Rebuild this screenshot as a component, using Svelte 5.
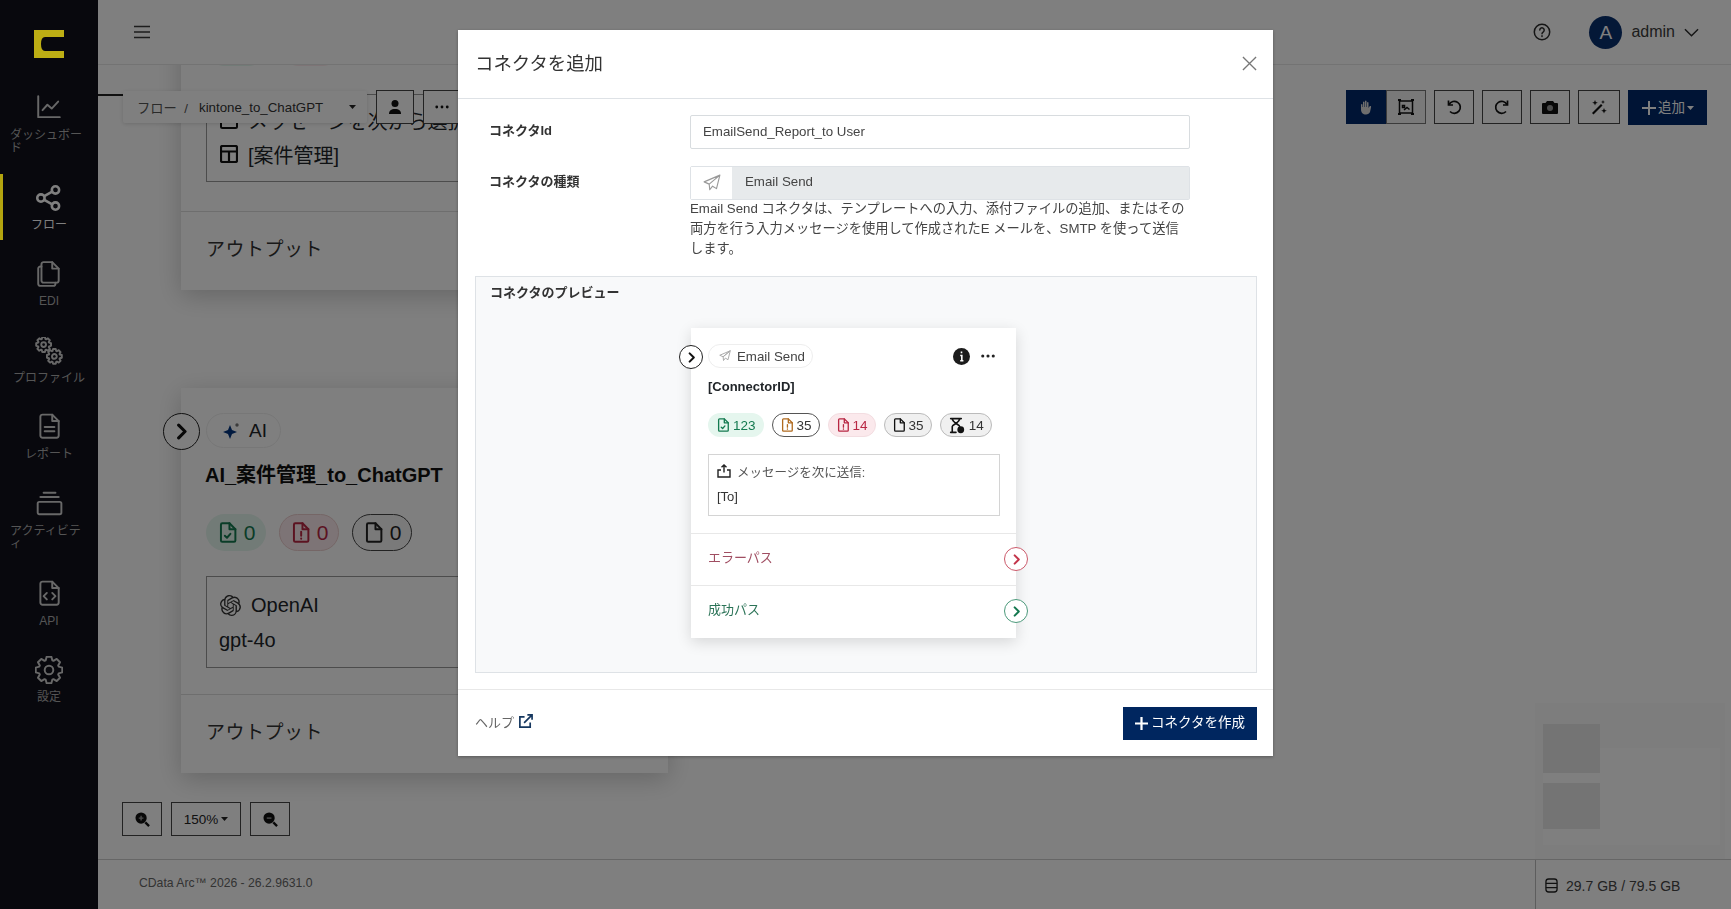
<script>
  // gear outline, used by the profile and settings icons
  function gear(cx, cy, r, teeth = 8) {
    const pts = [];
    const step = (Math.PI * 2) / teeth;
    for (let i = 0; i < teeth; i++) {
      const a = i * step;
      [[-0.3, r * 0.76], [-0.16, r], [0.16, r], [0.3, r * 0.76]].forEach(([o, rad]) => {
        const t = a + o * step * 1.4;
        pts.push((cx + Math.cos(t) * rad).toFixed(2) + " " + (cy + Math.sin(t) * rad).toFixed(2));
      });
    }
    return "M" + pts.join("L") + "Z";
  }
  function ring(cx, cy, r) {
    return `M${cx - r} ${cy}a${r} ${r} 0 1 0 ${r * 2} 0a${r} ${r} 0 1 0 ${-r * 2} 0Z`;
  }

  const nav = [
    { label: "ダッシュボード", paths: ["M3 2v19.500h20", "M7 15l4.500-5 4 3.500L21.500 7"] },
    { label: "フロー", active: true, paths: [ring(19, 5.5, 3.4), ring(19, 20.5, 3.4), ring(5.5, 13, 3.4), "M8.600 11.300l7.400-4.200", "M8.600 14.700l7.400 4.200"], sw: 2.4 },
    { label: "EDI", paths: ["M8 2h8l6 6v11a2 2 0 0 1-2 2H8a2 2 0 0 1-2-2V4a2 2 0 0 1 2-2Z", "M16 2v6h6", "M6 6H5a2 2 0 0 0-2 2v14a2 2 0 0 0 2 2h12a2 2 0 0 0 2-2v-1"] },
    { label: "プロファイル", paths: [gear(8, 7, 7), ring(8, 7, 2.2), gear(18, 18, 7), ring(18, 18, 2.2)] },
    { label: "レポート", paths: ["M7 1.500h9l6 6V21a2 2 0 0 1-2 2H7a2 2 0 0 1-2-2V3.500a2 2 0 0 1 2-2Z", "M16 1.500v6h6", "M9 13h9", "M9 17h9"] },
    { label: "アクティビティ", paths: ["M4 11h19a1.500 1.500 0 0 1 1.500 1.500V21a1.500 1.500 0 0 1-1.500 1.500H4A1.500 1.500 0 0 1 2.500 21v-8.500A1.500 1.500 0 0 1 4 11Z", "M5 6.500h17", "M8 2.500h11"] },
    { label: "API", paths: ["M7 1.500h9l6 6V21a2 2 0 0 1-2 2H7a2 2 0 0 1-2-2V3.500a2 2 0 0 1 2-2Z", "M16 1.500v6h6", "M11 12l-3 3 3 3", "M16 12l3 3-3 3"] },
    { label: "設定", paths: [gear(13, 13, 12.5), ring(13, 13, 4)] }
  ];

  const plane = "M15 1L1 7l4.500 2L15 1ZM15 1L5.500 9 6 14l2.500-3.200L12 13 15 1Z";
  const caret = "M0 0h7L3.500 4Z";
  const openai = "M22.2819 9.8211a5.9847 5.9847 0 0 0-.5157-4.9108 6.0462 6.0462 0 0 0-6.5098-2.9A6.0651 6.0651 0 0 0 4.9807 4.1818a5.9847 5.9847 0 0 0-3.9977 2.9 6.0462 6.0462 0 0 0 .7427 7.0966 5.98 5.98 0 0 0 .511 4.9107 6.051 6.051 0 0 0 6.5146 2.9001A5.9847 5.9847 0 0 0 13.2599 24a6.0557 6.0557 0 0 0 5.7718-4.2058 5.9894 5.9894 0 0 0 3.9977-2.9001 6.0557 6.0557 0 0 0-.7475-7.0729zm-9.022 12.6081a4.4755 4.4755 0 0 1-2.8764-1.0408l.1419-.0804 4.7783-2.7582a.7948.7948 0 0 0 .3927-.6813v-6.7369l2.02 1.1686a.071.071 0 0 1 .038.052v5.5826a4.504 4.504 0 0 1-4.4945 4.4944zm-9.6607-4.1254a4.4708 4.4708 0 0 1-.5346-3.0137l.142.0852 4.783 2.7582a.7712.7712 0 0 0 .7806 0l5.8428-3.3685v2.3324a.0804.0804 0 0 1-.0332.0615L9.74 19.9502a4.4992 4.4992 0 0 1-6.1408-1.6464zM2.3408 7.8956a4.485 4.485 0 0 1 2.3655-1.9728V11.6a.7664.7664 0 0 0 .3879.6765l5.8144 3.3543-2.0201 1.1685a.0757.0757 0 0 1-.071 0l-4.8303-2.7865A4.504 4.504 0 0 1 2.3408 7.872zm16.5963 3.8558L13.1038 8.364 15.1192 7.2a.0757.0757 0 0 1 .071 0l4.8303 2.7913a4.4944 4.4944 0 0 1-.6765 8.1042v-5.6772a.79.79 0 0 0-.407-.667zm2.0107-3.0231l-.142-.0852-4.7735-2.7818a.7759.7759 0 0 0-.7854 0L9.409 9.2297V6.8974a.0662.0662 0 0 1 .0284-.0615l4.8303-2.7866a4.4992 4.4992 0 0 1 6.6802 4.66zM8.3065 12.863l-2.02-1.1638a.0804.0804 0 0 1-.038-.0567V6.0742a4.4992 4.4992 0 0 1 7.3757-3.4537l-.142.0805L8.704 5.459a.7948.7948 0 0 0-.3927.6813zm1.0976-2.3654l2.602-1.4998 2.6069 1.4998v2.9994l-2.5974 1.4997-2.6067-1.4997Z";
</script>

{#snippet doc(mark)}
  <svg class="doc" viewBox="0 0 16 16" fill="none" stroke="currentColor" stroke-width="1.500" stroke-linejoin="round" stroke-linecap="round">
    <path d="M4 1h5.500L14 5.500V14a1 1 0 0 1-1 1H4a1 1 0 0 1-1-1V2a1 1 0 0 1 1-1Z" />
    <path d="M9.500 1v4.500H14" />
    {#if mark === "ok"}<path d="M6 10.500l1.600 1.500 2.600-3" />{/if}
    {#if mark === "warn"}<path d="M8.500 7.500v3M8.500 12.600v.2" />{/if}
  </svg>
{/snippet}

{#snippet badge(kind, mark, n)}
  <span class="badge {kind}">
    {#if mark === "wait"}
      <svg class="doc wait" viewBox="0 0 16 16" fill="none" stroke="currentColor" stroke-width="1.500" stroke-linecap="round">
        <path d="M2.500 1.500h10M2.500 14.500h5M4 1.500c0 4 7 5.500 7 7.500M11 1.500c0 4-7 5.500-7 7.500v5.500" />
        <circle cx="12" cy="12" r="3.200" fill="currentColor" stroke="none" />
      </svg>
    {:else}
      {@render doc(mark)}
    {/if}
    {n}
  </span>
{/snippet}

{#snippet chevron(kind)}
  <span class="chev {kind}">
    <svg viewBox="0 0 12 12" fill="none" stroke="currentColor" stroke-width="2.200" stroke-linecap="round" stroke-linejoin="round"><path d="M4 1.500 8.500 6 4 10.500" /></svg>
  </span>
{/snippet}

<div class="app">
  <aside class="sidebar">
    <div class="logo">
      <svg viewBox="0 0 30 28" width="30" height="28"><path d="M0 0h30v7H11Q7 7 7 14t4 7h19v7H0Z" fill="#bdae14" /></svg>
    </div>
    <nav class="nav">
      {#each nav as item}
        <div class="nav-item" class:active={item.active}>
          <svg viewBox="0 0 26 26" width="28" height="28" fill="none" stroke="currentColor" stroke-width={item.sw ?? 1.8} stroke-linecap="round" stroke-linejoin="round">
            {#each item.paths as d}<path {d} />{/each}
          </svg>
          <span>{item.label}</span>
        </div>
      {/each}
    </nav>
  </aside>

  <div class="main">
    <header class="topbar">
      <svg class="burger" viewBox="0 0 16 14" width="16" height="14" stroke="#333" stroke-width="1.600"><path d="M0 1.500h16M0 7h16M0 12.500h16" /></svg>
      <div class="user">
        <svg viewBox="0 0 18 18" width="18" height="18" fill="none" stroke="#222" stroke-width="1.500"><circle cx="9" cy="9" r="7.700" /><path d="M6.800 7a2.200 2.200 0 1 1 3.500 1.800c-.9.600-1.300 1-1.300 2M9 12.800v.6" stroke-linecap="round" /></svg>
        <span class="avatar">A</span>
        <span class="uname">admin</span>
        <svg viewBox="0 0 16 9" width="15" height="9" fill="none" stroke="#222" stroke-width="1.500"><path d="M1 1l7 7 7-7" /></svg>
      </div>
    </header>

    <section class="canvas">
      <div class="tab-line"></div>

      <!-- flow nodes, placed on the canvas -->
      <article class="node node-one">
        <div class="stats">
          <span class="stub ok"></span>
          <span class="stub err"></span>
        </div>
        <div class="node-box">
          <div class="box-line">
            <svg viewBox="0 0 18 18" width="18" height="18" fill="none" stroke="#111" stroke-width="2"><rect x="1" y="1" width="16" height="16" rx="1.500" /></svg>
            <span>メッセージを次から選択</span>
          </div>
          <div class="box-line">
            <svg viewBox="0 0 18 18" width="18" height="18" fill="none" stroke="#111" stroke-width="2.200"><rect x="1" y="1" width="16" height="16" rx="1.500" /><path d="M1 6.500h16M9 6.500V17" /></svg>
            <span>[案件管理]</span>
          </div>
        </div>
        <div class="node-out">アウトプット</div>
      </article>

      <article class="node node-two">
        <div class="node-chev">{@render chevron("plain big")}</div>
        <div class="ai-pill">
          <svg viewBox="0 0 18 18" width="18" height="18"><path d="M8 3l2 5 5 2-5 2-2 5-2-5-5-2 5-2Z" fill="#03357f" /><circle cx="15" cy="3" r="1.700" fill="#777" /></svg>
          AI
        </div>
        <h3>AI_案件管理_to_ChatGPT</h3>
        <div class="stats">
          {@render badge("ok lg", "ok", 0)}
          {@render badge("err lg", "warn", 0)}
          {@render badge("out lg", "", 0)}
        </div>
        <div class="node-box">
          <div class="box-line">
            <svg viewBox="0 0 24 24" width="21" height="21" fill="#333"><path d={openai} /></svg>
            <span>OpenAI</span>
          </div>
          <div class="box-model">gpt-4o</div>
        </div>
        <div class="node-out">アウトプット</div>
      </article>

      <div class="crumbs">
        <span class="crumb-root">フロー&nbsp; /</span>
        <span class="crumb-name">kintone_to_ChatGPT</span>
        <svg viewBox="0 0 7 4" width="7" height="4"><path d={caret} fill="#222" /></svg>
      </div>
      <div class="crumb-actions">
        <button class="tool">
          <svg viewBox="0 0 16 16" width="16" height="16" fill="#111"><circle cx="8" cy="4.500" r="3.500" /><path d="M2 15c0-3.500 2-5 6-5s6 1.500 6 5Z" /></svg>
        </button>
        <button class="tool">
          <svg viewBox="0 0 16 4" width="14" height="4" fill="#111"><circle cx="2" cy="2" r="1.600" /><circle cx="8" cy="2" r="1.600" /><circle cx="14" cy="2" r="1.600" /></svg>
        </button>
      </div>

      <div class="toolbar">
        <div class="group">
          <button class="tool on">
            <svg viewBox="0 0 16 16" width="16" height="16" fill="#ddd"><path d="M3 8V5.500a1 1 0 0 1 1.500 0V8h.5V3a1 1 0 0 1 1.500 0v5h.5V2a1 1 0 0 1 1.500 0v6h.5V3.500a1 1 0 0 1 1.500 0V9l1-1.500c1-1 2 0 1.500 1L12 13c-.7 1.500-2 2.500-4 2.500-3 0-5-2-5-5Z" /></svg>
          </button>
          <button class="tool">
            <svg viewBox="0 0 16 16" width="16" height="16" fill="none" stroke="#111" stroke-width="1.500"><rect x="1.500" y="2" width="13" height="12" /><path d="M4.500 6.500h2v2h-2Z M6 11l3-2.500 2.500 2" /><path d="M0 1h3M13 1h3M0 15h3M13 15h3" stroke-width="2" /></svg>
          </button>
        </div>
        <button class="tool">
          <svg viewBox="0 0 16 16" width="16" height="16" fill="none" stroke="#111" stroke-width="1.700"><path d="M3 5.500A6 6 0 1 1 4 12.500" /><path d="M2.500 1.500v4.500h4.500" /></svg>
        </button>
        <button class="tool">
          <svg viewBox="0 0 16 16" width="16" height="16" fill="none" stroke="#111" stroke-width="1.700"><path d="M13 5.500A6 6 0 1 0 12 12.500" /><path d="M13.500 1.500v4.500H9" /></svg>
        </button>
        <button class="tool">
          <svg viewBox="0 0 16 14" width="16" height="14" fill="#111"><path d="M5 1h6l1.500 2H15a1 1 0 0 1 1 1v9a1 1 0 0 1-1 1H1a1 1 0 0 1-1-1V4a1 1 0 0 1 1-1h2.500Z" /><circle cx="8" cy="8" r="3" fill="#999" /></svg>
        </button>
        <button class="tool wide">
          <svg viewBox="0 0 16 16" width="16" height="16" fill="#111"><path d="M1 14L10 5l1.500 1.500-9 9Z" /><path d="M4 1l.8 2 2 .8-2 .8L4 6.600l-.8-2-2-.8 2-.8ZM13 9l.8 2 2 .8-2 .8-.8 2-.8-2-2-.8 2-.8ZM12 1l.6 1.400 1.400.6-1.400.6L12 5l-.6-1.400L10 3l1.400-.6Z" /></svg>
        </button>
        <button class="add">
          <svg viewBox="0 0 14 14" width="14" height="14" stroke="#fff" stroke-width="2"><path d="M7 0v14M0 7h14" /></svg>
          <span class="lift">追加</span>
          <svg viewBox="0 0 7 4" width="7" height="4"><path d={caret} fill="#fff" /></svg>
        </button>
      </div>

      <div class="zoomer">
        <button class="tool">
          <svg viewBox="0 0 16 16" width="15" height="15" fill="none" stroke="#111"><circle cx="6.500" cy="6.500" r="6" fill="#111" stroke="none" /><path d="M4 6.500h5M6.500 4v5" stroke="#999" stroke-width="1.500" /><path d="M11 11l4 4" stroke-width="2.500" /></svg>
        </button>
        <button class="tool pct">150%<svg viewBox="0 0 7 4" width="7" height="4"><path d={caret} fill="#222" /></svg></button>
        <button class="tool">
          <svg viewBox="0 0 16 16" width="15" height="15" fill="none" stroke="#111"><circle cx="6.500" cy="6.500" r="6" fill="#111" stroke="none" /><path d="M4 6.500h5" stroke="#999" stroke-width="1.500" /><path d="M11 11l4 4" stroke-width="2.500" /></svg>
        </button>
      </div>

      <div class="minimap">
        <div class="mini-view"></div>
        <div class="mini-node first"></div>
        <div class="mini-node second"></div>
      </div>
    </section>

    <footer class="footer">
      <span class="version">CData Arc™ 2026 - 26.2.9631.0</span>
      <span class="storage">
        <svg viewBox="0 0 14 16" width="13" height="15" fill="none" stroke="#222" stroke-width="1.400"><rect x="1" y="1" width="12" height="14" rx="3" /><path d="M1 5.700h12M1 10.300h12" /></svg>
        29.7 GB / 79.5 GB
      </span>
    </footer>
  </div>

  <div class="backdrop"></div>

  <div class="modal-wrap">
    <div class="modal">
      <div class="modal-head">
        <h2>コネクタを追加</h2>
        <svg viewBox="0 0 16 16" width="15" height="15" stroke="#777" stroke-width="1.400"><path d="M1 1l14 14M15 1L1 15" /></svg>
      </div>

      <div class="modal-body">
        <div class="form-row">
          <div class="form-label">コネクタId</div>
          <div class="form-field">
            <input type="text" value="EmailSend_Report_to User" />
          </div>
        </div>
        <div class="form-row">
          <div class="form-label">コネクタの種類</div>
          <div class="form-field">
            <div class="type-group">
              <span class="type-icon">
                <svg viewBox="0 0 16 16" width="18" height="18" fill="none" stroke="#999" stroke-width="1" stroke-linejoin="round"><path d={plane} /></svg>
              </span>
              <span class="type-name">Email Send</span>
            </div>
            <p class="hint">Email Send コネクタは、テンプレートへの入力、添付ファイルの追加、またはその両方を行う入力メッセージを使用して作成されたE メールを、SMTP を使って送信します。</p>
          </div>
        </div>

        <div class="preview">
          <div class="preview-title">コネクタのプレビュー</div>
          <div class="card">
            <div class="card-in">{@render chevron("plain")}</div>
            <div class="card-top">
              <div class="card-head">
                <span class="pill">
                  <svg viewBox="0 0 16 16" width="12" height="12" fill="none" stroke="#aaa" stroke-width="1.300" stroke-linejoin="round"><path d={plane} /></svg>
                  Email Send
                </span>
                <span class="card-tools">
                  <svg viewBox="0 0 16 16" width="17" height="17"><circle cx="8" cy="8" r="8" fill="#1c1c1c" /><path d="M8 3.400v1.500M6.800 7H8.300v5M6.800 12h3" stroke="#fff" stroke-width="1.500" fill="none" /></svg>
                  <svg viewBox="0 0 16 4" width="14" height="4" fill="#222"><circle cx="2" cy="2" r="1.800" /><circle cx="8" cy="2" r="1.800" /><circle cx="14" cy="2" r="1.800" /></svg>
                </span>
              </div>
              <div class="card-id">[ConnectorID]</div>
              <div class="stats small">
                {@render badge("ok", "ok", 123)}
                {@render badge("warnb", "warn", 35)}
                {@render badge("err", "warn", 14)}
                {@render badge("neutral", "", 35)}
                {@render badge("neutral", "wait", 14)}
              </div>
              <div class="msg">
                <div class="msg-line">
                  <svg viewBox="0 0 14 14" width="14" height="14" fill="none" stroke="#222" stroke-width="1.400"><path d="M7 8.500V1M4.500 3.300 7 1l2.500 2.300" /><path d="M4 6H1v7h12V6H10" /></svg>
                  メッセージを次に送信:
                </div>
                <div class="msg-to">[To]</div>
              </div>
            </div>
            <div class="path err-path">エラーパス {@render chevron("red")}</div>
            <div class="path ok-path">成功パス {@render chevron("green")}</div>
          </div>
        </div>
      </div>

      <div class="modal-foot">
        <span class="help"><span class="lift">ヘルプ</span>
          <svg viewBox="0 0 16 16" width="15" height="15" fill="none" stroke="#15375f" stroke-width="1.800"><path d="M7 3H2v11h11V9" /><path d="M6.500 9.500 15 1M10 1h5v5" /></svg>
        </span>
        <button class="create">
          <svg viewBox="0 0 14 14" width="13" height="13" stroke="#fff" stroke-width="2.400"><path d="M7 0v14M0 7h14" /></svg>
          <span class="lift">コネクタを作成</span>
        </button>
      </div>
    </div>
  </div>
</div>

<style>
  :global(body) {
    margin: 0;
    background: #fff;
    font-family: "Liberation Sans", "Noto Sans CJK JP", sans-serif;
  }

  .app {
    display: flex;
    height: 909px;
    overflow: hidden;
    color: #212529;
  }
  /* Noto's CJK glyphs sit low in the line box */
  .lift {
    position: relative;
    top: -2px;
  }

  /* sidebar */
  .sidebar {
    width: 98px;
    flex: none;
    background: #10101a;
  }
  .logo {
    position: relative;
    z-index: 20;
    display: flex;
    justify-content: center;
    padding: 30px 0 26px;
  }
  .logo svg {
    display: block;
    margin-left: -1px;
  }
  .nav-item {
    position: relative;
    display: flex;
    flex-direction: column;
    align-items: center;
    box-sizing: border-box;
    padding: 10px 10px 8px;
    margin-bottom: 10.600px;
    color: #d0d0d0;
    font-size: 12px;
    line-height: 13px;
  }
  .nav-item span {
    display: block;
    max-width: 78px;
    margin-top: 7px;
    color: #aaa;
    text-align: left;
  }
  .nav-item.active {
    color: #fff;
  }
  .nav-item.active span {
    color: #fff;
  }
  .nav-item.active::before {
    content: "";
    position: absolute;
    z-index: 20;
    left: 0;
    top: 0;
    bottom: 0;
    width: 3px;
    background: #b3a40f;
  }

  /* main column */
  .main {
    flex: 1;
    min-width: 0;
    display: flex;
    flex-direction: column;
  }
  .topbar {
    height: 65px;
    flex: none;
    box-sizing: border-box;
    display: flex;
    align-items: center;
    justify-content: space-between;
    padding: 0 32px 0 36px;
    background: #fff;
    border-bottom: 1px solid #e5e5e5;
    position: relative;
    z-index: 2;
    opacity: 0.96;
  }
  .burger {
    display: block;
  }
  .user {
    display: flex;
    align-items: center;
  }
  .avatar {
    width: 33px;
    height: 33px;
    margin-left: 38px;
    border-radius: 50%;
    background: #00286a;
    color: #fff;
    font-size: 19px;
    line-height: 33px;
    text-align: center;
  }
  .uname {
    margin: 0 9px 0 9px;
    font-size: 16px;
    color: #333;
  }
  .canvas {
    position: relative;
    flex: 1;
    overflow: hidden;
    background: #fff;
  }
  .tab-line {
    position: absolute;
    left: 0;
    top: 29px;
    width: 25px;
    height: 2px;
    background: #222;
  }

  /* flow nodes */
  .node {
    position: absolute;
    left: 83px;
    width: 487px;
    box-sizing: border-box;
    background: #fff;
    box-shadow: 0 6px 24px rgba(0, 0, 0, 0.2);
  }
  .node-one {
    top: -36px;
    height: 261px;
  }
  .node-two {
    top: 323px;
    height: 385px;
    padding-top: 25px;
  }
  .node-chev {
    position: absolute;
    left: -18px;
    top: 25px;
  }
  .ai-pill {
    display: inline-flex;
    align-items: center;
    gap: 9px;
    margin-left: 25px;
    height: 35px;
    padding: 0 13px 0 15px;
    border: 1px solid #eee;
    border-radius: 18px;
    font-size: 19px;
    box-sizing: border-box;
  }
  .node h3 {
    margin: 12px 0 24px 24px;
    font-size: 20px;
    line-height: 30px;
    color: #111;
  }
  .node .stats {
    gap: 13px;
    margin-left: 25px;
  }
  .stub {
    width: 61px;
    height: 37px;
    border-radius: 19px;
    box-sizing: border-box;
  }
  .node-box {
    margin: 25px 27px 0 25px;
    padding: 14px 13px 14px;
    border: 1px solid #999;
    font-size: 20px;
  }
  .node-one .node-box {
    margin-top: 28px;
    padding-top: 8px;
    padding-bottom: 10px;
  }
  .box-line {
    display: flex;
    align-items: center;
    gap: 10px;
    height: 28px;
    white-space: nowrap;
    overflow: hidden;
  }
  .node-one .box-line {
    height: 34px;
  }
  .box-model {
    margin: 8px 0 0 -1px;
    line-height: 26px;
  }
  .node-out {
    position: absolute;
    left: 0;
    right: 0;
    bottom: 0;
    height: 79px;
    box-sizing: border-box;
    padding: 22px 0 0 25px;
    border-top: 1px solid #ddd;
    font-size: 19px;
    letter-spacing: 0.5px;
    color: #333;
  }

  /* badges */
  .stats {
    display: flex;
    gap: 9px;
  }
  .badge {
    display: inline-flex;
    align-items: center;
    justify-content: center;
    gap: 3px;
    height: 24px;
    padding: 0 8px;
    border: 1px solid transparent;
    border-radius: 13px;
    font-size: 13.500px;
    box-sizing: border-box;
  }
  .doc {
    width: 14px;
    height: 14px;
  }
  .doc.wait {
    width: 17px;
    height: 17px;
    margin-right: 1px;
  }
  .badge.lg {
    height: 37px;
    width: 60px;
    gap: 6px;
    padding: 0;
    border-radius: 19px;
    font-size: 21px;
  }
  .badge.lg .doc {
    width: 21px;
    height: 21px;
  }
  .ok {
    background: #e5f6ee;
    color: #147a50;
  }
  .err {
    background: #fbe9ec;
    border-color: #f3dde1;
    color: #b82743;
  }
  .warnb {
    background: #fff;
    border-color: #555;
    color: #333;
  }
  .warnb .doc {
    color: #b06a1e;
  }
  .neutral {
    background: #f0f0f0;
    border-color: #bbb;
    color: #333;
  }
  .neutral .doc {
    color: #111;
  }
  .out {
    background: #f5f5f5;
    border-color: #444;
    color: #222;
  }
  .err.lg {
    border-color: #eacccc;
  }

  /* chevron circles */
  .chev {
    display: inline-flex;
    align-items: center;
    justify-content: center;
    width: 24px;
    height: 24px;
    box-sizing: border-box;
    border: 1px solid #222;
    border-radius: 50%;
    background: #fff;
    color: #111;
  }
  .chev svg {
    width: 11px;
    height: 11px;
  }
  .chev.big {
    width: 37px;
    height: 37px;
    border-width: 1.500px;
  }
  .chev.big svg {
    width: 17px;
    height: 17px;
  }
  .chev.red {
    border-color: #cc5a6b;
    color: #c3344a;
  }
  .chev.green {
    border-color: #4c9a7b;
    color: #14784f;
  }

  /* canvas overlays */
  .crumbs {
    position: absolute;
    left: 25px;
    top: 26px;
    width: 244px;
    height: 32px;
    box-sizing: border-box;
    display: flex;
    align-items: center;
    padding: 0 11px 0 14px;
    background: #fff;
    border-radius: 2px;
    box-shadow: 0 1px 4px rgba(0, 0, 0, 0.15);
    font-size: 13.300px;
    color: #333;
  }
  .crumb-root {
    white-space: nowrap;
    color: #555;
  }
  .crumb-name {
    flex: 1;
    margin-left: 11px;
  }
  .crumb-actions {
    position: absolute;
    left: 278px;
    top: 25px;
    display: flex;
    gap: 9px;
  }
  .tool {
    display: flex;
    align-items: center;
    justify-content: center;
    gap: 3px;
    width: 38px;
    height: 34px;
    padding: 0;
    box-sizing: border-box;
    background: #fff;
    border: 1px solid #444;
    border-radius: 0;
    font: 13.500px "Liberation Sans", sans-serif;
    color: #222;
  }
  .toolbar {
    position: absolute;
    right: 24px;
    top: 25px;
    display: flex;
    gap: 8px;
  }
  .toolbar .tool {
    width: 40px;
    background: #fff;
  }
  .toolbar .tool.wide {
    width: 42px;
  }
  .group {
    display: flex;
  }
  .group .tool {
    border-color: #777;
    background: #f2f2f2;
  }
  .group .tool.on {
    border-color: #00286a;
    background: #00286a;
  }
  .add {
    display: flex;
    align-items: center;
    gap: 2px;
    height: 35px;
    padding: 0 13px 0 14px;
    background: #00286a;
    border: 0;
    color: #fff;
    font-size: 13.500px;
    font-family: inherit;
  }
  .zoomer {
    position: absolute;
    left: 24px;
    top: 737px;
    display: flex;
    gap: 9px;
  }
  .zoomer .tool {
    width: 40px;
  }
  .zoomer .tool.pct {
    width: 70px;
  }
  .minimap {
    position: absolute;
    left: 1437px;
    top: 638px;
    width: 190px;
    height: 160px;
    background: #fafafa;
  }
  .mini-view {
    position: absolute;
    left: 8px;
    top: 45px;
    width: 177px;
    height: 97px;
    background: #fff;
  }
  .mini-node {
    position: absolute;
    left: 8px;
    width: 57px;
    background: #e8e8e8;
  }
  .mini-node.first {
    top: 21px;
    height: 49px;
  }
  .mini-node.second {
    top: 80px;
    height: 46px;
  }

  .footer {
    height: 49px;
    flex: none;
    display: flex;
    align-items: stretch;
    justify-content: space-between;
    border-top: 1px solid #ccc;
    background: #fff;
    font-size: 12.200px;
    color: #666;
  }
  .version {
    padding-left: 41px;
    line-height: 47px;
  }
  .storage {
    width: 196px;
    box-sizing: border-box;
    display: flex;
    align-items: center;
    gap: 8px;
    padding: 2px 0 0 9px;
    border-left: 1px solid #bbb;
    font-size: 14px;
    color: #444;
  }

  /* modal */
  .backdrop {
    position: fixed;
    inset: 0;
    z-index: 10;
    background: rgba(0, 0, 0, 0.5);
  }
  .modal-wrap {
    position: fixed;
    inset: 0;
    z-index: 30;
    display: flex;
    justify-content: center;
    padding-top: 30px;
    align-items: flex-start;
  }
  .modal {
    width: 815px;
    height: 726px;
    display: flex;
    flex-direction: column;
    background: #fff;
    box-shadow: 0 1px 3px rgba(0, 0, 0, 0.3);
  }
  .modal-head {
    height: 69px;
    flex: none;
    box-sizing: border-box;
    display: flex;
    align-items: center;
    justify-content: space-between;
    padding: 0 16px 0 17px;
    border-bottom: 1px solid #dee2e6;
  }
  .modal-head h2 {
    margin: -4px 0 0;
    font-size: 18.400px;
    font-weight: 400;
    color: #333;
  }
  .modal-head svg {
    margin-top: -2px;
  }
  .modal-body {
    flex: 1;
    padding: 16px 16px 0 17px;
  }
  .form-row {
    display: flex;
    margin-bottom: 17px;
  }
  .form-label {
    width: 215px;
    flex: none;
    box-sizing: border-box;
    padding: 5px 0 0 14px;
    font-size: 13px;
    font-weight: 700;
    color: #333;
  }
  .form-field {
    width: 500px;
  }
  .form-field input {
    display: block;
    width: 100%;
    height: 34px;
    box-sizing: border-box;
    padding: 0 12px 2px;
    border: 1px solid #d8dcdf;
    border-radius: 2px;
    font: 13.300px "Liberation Sans", sans-serif;
    color: #444;
    outline: none;
  }
  .type-group {
    display: flex;
    height: 34px;
    border: 1px solid #dee2e6;
    border-radius: 2px;
    box-sizing: border-box;
  }
  .type-icon {
    width: 41px;
    flex: none;
    display: flex;
    align-items: center;
    justify-content: center;
    background: #fff;
  }
  .type-name {
    flex: 1;
    padding-left: 13px;
    background: #e7eaec;
    font-size: 13.300px;
    line-height: 30px;
    color: #444;
  }
  .hint {
    margin: -1px 0 0;
    font-size: 13.250px;
    line-height: 20px;
    color: #444;
  }
  .preview {
    box-sizing: border-box;
    height: 397px;
    padding: 7px 0 0 14px;
    border: 1px solid #dee2e6;
    background: #f8f9fa;
  }
  .preview-title {
    font-size: 13px;
    font-weight: 700;
    line-height: 18px;
    color: #333;
  }
  .card {
    position: relative;
    width: 325px;
    height: 310px;
    margin: 26px 0 0 201px;
    background: #fff;
    box-shadow: 0 4px 14px rgba(0, 0, 0, 0.14);
  }
  .card-in {
    position: absolute;
    left: -12px;
    top: 17px;
    line-height: 0;
  }
  .card-top {
    padding: 16px 16px 0 17px;
    height: 205px;
    box-sizing: border-box;
  }
  .card-head {
    display: flex;
    align-items: center;
    justify-content: space-between;
    padding-right: 5px;
  }
  .pill {
    display: inline-flex;
    align-items: center;
    gap: 6px;
    height: 24px;
    padding: 0 7px 0 10px;
    border: 1px solid #eee;
    border-radius: 12px;
    box-sizing: border-box;
    font-size: 13.300px;
    color: #444;
  }
  .card-tools {
    display: flex;
    align-items: center;
    gap: 11px;
  }
  .card-id {
    margin: 11px 0 19px;
    font-size: 13px;
    font-weight: 700;
    line-height: 15px;
  }
  .stats.small {
    gap: 8px;
  }
  .stats.small .badge {
    padding: 0 7px;
  }
  .msg {
    height: 62px;
    margin-top: 17px;
    box-sizing: border-box;
    padding: 9px 8px;
    border: 1px solid #d4d4d4;
    font-size: 12.500px;
    color: #555;
  }
  .msg-line {
    display: flex;
    align-items: center;
    gap: 6px;
    height: 14px;
  }
  .msg-to {
    margin-top: 11px;
    color: #333;
    font-size: 13px;
  }
  .path {
    position: relative;
    display: flex;
    align-items: center;
    height: 52px;
    box-sizing: border-box;
    padding: 0 0 6px 17px;
    border-top: 1px solid #e8e8e8;
    font-size: 13px;
  }
  .path .chev {
    position: absolute;
    right: -12px;
    top: 13px;
  }
  .err-path {
    color: #a04e62;
  }
  .ok-path {
    color: #2b7357;
  }
  .modal-foot {
    height: 67px;
    flex: none;
    box-sizing: border-box;
    display: flex;
    align-items: center;
    justify-content: space-between;
    padding: 0 16px 0 17px;
    border-top: 1px solid #e8e8e8;
  }
  .help {
    display: flex;
    align-items: center;
    gap: 4px;
    font-size: 13px;
    color: #666;
  }
  .help svg {
    margin-top: -3px;
  }
  .create {
    display: flex;
    align-items: center;
    gap: 3px;
    height: 33px;
    padding: 0 12px;
    background: #00265f;
    border: 0;
    color: #fff;
    font-size: 13.500px;
    font-family: inherit;
  }
</style>
